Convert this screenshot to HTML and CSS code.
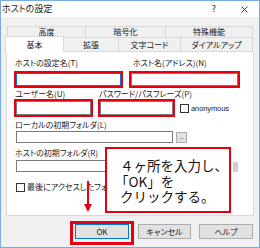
FILE: index.html
```html
<!DOCTYPE html>
<html lang="ja">
<head>
<meta charset="utf-8">
<link rel="stylesheet" href="styles.css">
</head>
<body>
<div class="window">
  <div class="titlebar">
    <span class="title">ホストの設定</span>
    <span class="help">?</span>
    <svg class="close" viewBox="0 0 7 7"><path d="M0.5 0.5L6.5 6.5M6.5 0.5L0.5 6.5" stroke="#222" stroke-width="0.9" fill="none"/></svg>
  </div>
  <div class="tabs">
    <div class="tabrow row1">
      <div class="tab t-adv">高度</div>
      <div class="tab t-enc">暗号化</div>
      <div class="tab t-spe">特殊機能</div>
    </div>
    <div class="tabrow row2">
      <div class="tab tab-active t-basic">基本</div>
      <div class="tab t-ext">拡張</div>
      <div class="tab t-code">文字コード</div>
      <div class="tab t-dial">ダイアルアップ</div>
    </div>
  </div>
  <div class="panel">
    <div class="row row-a">
      <span class="lbl">ホストの設定名(T)</span>
      <span class="lbl lbl-host">ホスト名(アドレス)(N)</span>
      <div class="input focus hl"></div>
      <div class="input hl"></div>
    </div>
    <div class="row row-b">
      <span class="lbl">ユーザー名(U)</span>
      <span class="lbl">パスワード/パスフレーズ(P)</span>
      <div class="input hl"></div>
      <div class="input hl"></div>
      <div class="anon"><span class="check"></span><span class="anon-text">anonymous</span></div>
    </div>
    <div class="row row-c">
      <span class="lbl lbl-wide">ローカルの初期フォルダ(L)</span>
      <div class="input"></div>
      <div class="browse">...</div>
    </div>
    <div class="row row-d">
      <span class="lbl lbl-wide">ホストの初期フォルダ(R)</span>
      <div class="input"></div>
      <div class="browse"></div>
      <div class="stub"></div>
    </div>
    <div class="row-e">
      <span class="check"></span>
      <span class="lbl">最後にアクセスしたフォルダ</span>
    </div>
  </div>
  <div class="buttons">
    <div class="btn btn-ok">OK</div>
    <div class="btn btn-cancel">キャンセル</div>
    <div class="btn btn-help">ヘルプ</div>
  </div>
  <div class="callout">
    <div>４ヶ所を入力し、</div>
    <div class="l2">「OK」を</div>
    <div>クリックする。</div>
  </div>
  <svg class="arrow" viewBox="0 0 10 32"><path d="M5 0V24" stroke="#e60012" stroke-width="2"/><path d="M1 23H9L5 31Z" fill="#e60012"/></svg>
</div>
</body>
</html>
```

FILE: styles.css
```css
* { box-sizing: border-box; }
body { margin: 0; background: #fff; }

.window {
  width: 260px;
  height: 248px;
  border: 1px solid #79acdf;
  background: #f0f0f0;
  position: relative;
  overflow: hidden;
  font-family: "Noto Sans CJK JP", sans-serif;
  font-feature-settings: "palt";
  color: #1a1a1a;
}

.titlebar {
  height: 16px;
  background: #fff;
  display: flex;
  align-items: center;
  padding-left: 1px;
  font-size: 9px;
}
.title { line-height: 16px; }
.help {
  margin-left: auto;
  margin-right: 25px;
  font-family: "DejaVu Sans", sans-serif;
  font-size: 8px;
}
.close { width: 7px; height: 7px; margin-right: 11px; }

.tabs { margin: 9px 0 0 6px; }
.tabrow { display: flex; align-items: flex-start; }
.tab {
  border: 1px solid #d9d9d9;
  border-bottom: none;
  background: #f0f0f0;
  font-size: 8px;
  line-height: 1;
  display: flex;
  align-items: center;
  justify-content: center;
  white-space: nowrap;
}
.tab + .tab { margin-left: -1px; }
.row1 .tab { height: 11px; }
.row2 .tab { height: 14px; }
.t-adv { width: 79px; }
.t-enc { width: 81px; }
.t-spe { width: 88px; }
.t-ext { width: 56px; }
.t-code { width: 63px; }
.t-dial { width: 73px; }
.row2 .tab-active {
  width: 59px;
  height: 16px;
  margin: -1px 0 -1px -2px;
  background: #fff;
  position: relative;
  z-index: 1;
}

.panel {
  margin-left: 5px;
  width: 248px;
  height: 165px;
  border: 1px solid #d9d9d9;
  background: #fff;
  padding: 6px 0 0 9px;
}

.row { display: grid; }
.row > .input, .row > .browse { grid-row: 2; }
.lbl {
  font-size: 8px;
  line-height: 10px;
  white-space: nowrap;
  margin-left: -1px;
}
.lbl-host { margin-left: 2px; }
.lbl-wide { grid-column: 1 / 3; }

.input { background: #fff; border: 1px solid #7a7a7a; }
.input.focus { border-color: #0078d7; }
.hl { outline: 2px solid #e60012; outline-offset: 0; }

.row-a {
  grid-template-columns: 105px 107px;
  grid-template-rows: 10px 13px;
  column-gap: 10px;
  row-gap: 5px;
}
.row-b {
  margin-top: 3px;
  grid-template-columns: 75px 73px auto;
  grid-template-rows: 10px 14px;
  column-gap: 9px;
  row-gap: 2px;
}
.anon {
  grid-row: 2;
  grid-column: 3;
  display: flex;
  align-items: center;
  margin-left: -2px;
}
.check {
  width: 9px;
  height: 9px;
  border: 1px solid #333;
  background: #fff;
}
.anon-text {
  font-family: "Liberation Sans", sans-serif;
  font-size: 7.5px;
  margin-left: 2px;
  letter-spacing: -0.1px;
}

.row-c {
  margin-top: 5px;
  grid-template-columns: 157px 11px;
  grid-template-rows: 10px 12px;
  column-gap: 3px;
  row-gap: 1px;
}
.row-d {
  margin-top: 5px;
  grid-template-columns: 157px 11px 1fr;
  grid-template-rows: 10px 12px;
  column-gap: 3px;
  row-gap: 2px;
}
.browse {
  width: 11px;
  height: 11px;
  align-self: center;
  background: #e1e1e1;
  border: 1px solid #adadad;
  font-size: 5px;
  line-height: 7px;
  text-align: center;
  color: #555;
}
.stub {
  grid-row: 2;
  grid-column: 3;
  justify-self: end;
  align-self: end;
  width: 5px;
  height: 10px;
  margin-right: 15px;
  background: #cfcfcf;
}

.row-e {
  margin-top: 10px;
  display: flex;
  align-items: center;
  gap: 3px;
}

.buttons {
  display: flex;
  justify-content: flex-end;
  margin-top: 8px;
  padding-right: 6px;
}
.btn {
  height: 15px;
  background: #e1e1e1;
  border: 1px solid #adadad;
  font-size: 8px;
  display: flex;
  align-items: center;
  justify-content: center;
}
.btn-ok {
  width: 54px;
  margin-right: 9px;
  border-color: #0078d7;
  position: relative;
}
.btn-ok::after {
  content: "";
  position: absolute;
  left: -6px;
  right: -6px;
  top: -4px;
  bottom: -7px;
  border: 3px solid #e60012;
}
.btn-cancel { width: 53px; margin-right: 8px; }
.btn-help { width: 54px; }

.callout {
  position: absolute;
  left: 104px;
  top: 146px;
  width: 126px;
  height: 66px;
  border: 2px solid #e60012;
  background: #fff;
  padding: 9px 0 0 13px;
  font-size: 13.5px;
  line-height: 15.5px;
  font-feature-settings: normal;
  color: #111;
  white-space: nowrap;
}
.callout .l2 { margin-left: -5px; }

.arrow {
  position: absolute;
  left: 82px;
  top: 180px;
  width: 10px;
  height: 32px;
}
```
